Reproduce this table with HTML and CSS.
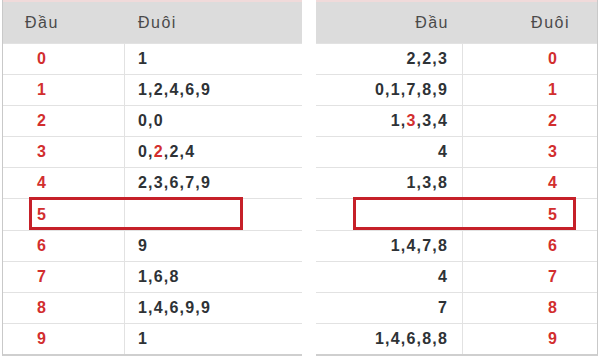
FILE: index.html
```html
<!DOCTYPE html>
<html lang="vi">
<head>
<meta charset="utf-8">
<title>Đầu Đuôi</title>
<link rel="stylesheet" href="styles.css">
</head>
<body>
<div class="page">
  <div class="tbl tbl-left">
    <div class="head"><span class="c1">Đầu</span><span class="c2">Đuôi</span></div>
    <div class="row"><span class="c1 key">0</span><span class="c2 val">1</span></div>
    <div class="row"><span class="c1 key">1</span><span class="c2 val">1,2,4,6,9</span></div>
    <div class="row"><span class="c1 key">2</span><span class="c2 val">0,0</span></div>
    <div class="row"><span class="c1 key">3</span><span class="c2 val">0,<b class="hl">2</b>,2,4</span></div>
    <div class="row"><span class="c1 key">4</span><span class="c2 val">2,3,6,7,9</span></div>
    <div class="row mark"><span class="c1 key">5</span><span class="c2 val"></span><i class="box"></i></div>
    <div class="row"><span class="c1 key">6</span><span class="c2 val">9</span></div>
    <div class="row"><span class="c1 key">7</span><span class="c2 val">1,6,8</span></div>
    <div class="row"><span class="c1 key">8</span><span class="c2 val">1,4,6,9,9</span></div>
    <div class="row"><span class="c1 key">9</span><span class="c2 val">1</span></div>
  </div>
  <div class="tbl tbl-right">
    <div class="head"><span class="c1">Đầu</span><span class="c2">Đuôi</span></div>
    <div class="row"><span class="c1 val">2,2,3</span><span class="c2 key">0</span></div>
    <div class="row"><span class="c1 val">0,1,7,8,9</span><span class="c2 key">1</span></div>
    <div class="row"><span class="c1 val">1,<b class="hl">3</b>,3,4</span><span class="c2 key">2</span></div>
    <div class="row"><span class="c1 val">4</span><span class="c2 key">3</span></div>
    <div class="row"><span class="c1 val">1,3,8</span><span class="c2 key">4</span></div>
    <div class="row mark"><span class="c1 val"></span><span class="c2 key">5</span><i class="box"></i></div>
    <div class="row"><span class="c1 val">1,4,7,8</span><span class="c2 key">6</span></div>
    <div class="row"><span class="c1 val">4</span><span class="c2 key">7</span></div>
    <div class="row"><span class="c1 val">7</span><span class="c2 key">8</span></div>
    <div class="row"><span class="c1 val">1,4,6,8,8</span><span class="c2 key">9</span></div>
  </div>
</div>
</body>
</html>
```

FILE: styles.css
```css
html, body {
  margin: 0;
  padding: 0;
  background: #ffffff;
}

body {
  font-family: "Liberation Sans", Arial, sans-serif;
  width: 600px;
  height: 357px;
  overflow: hidden;
}

.page {
  display: flex;
  gap: 14px;
  padding: 0 2px;
  align-items: flex-start;
}

.tbl {
  display: flex;
  flex-direction: column;
  border-bottom: 2px solid #cfcfcf;
  box-sizing: border-box;
}

.tbl-left {
  width: 300px;
  border-left: 1px solid #c9c9c9;
}

.tbl-right {
  width: 282px;
  border-right: 1px solid #c9c9c9;
}

.head {
  height: 43px;
  box-sizing: border-box;
  border-top: 2px solid #f0dada;
  background: #dcdcdc;
  display: grid;
  align-items: center;
  font-size: 16px;
  letter-spacing: 1.5px;
  color: #4a4a4a;
}

.row {
  position: relative;
  height: 31.1px;
  box-sizing: border-box;
  border-top: 1px solid #e2e2e2;
  display: grid;
  align-items: center;
  font-size: 16px;
  font-weight: bold;
  letter-spacing: 1.2px;
}

.tbl-left .head,
.tbl-left .row {
  grid-template-columns: 122px 1fr;
}

.tbl-right .head,
.tbl-right .row {
  grid-template-columns: 147px 1fr;
}

.row > .c1 {
  align-self: stretch;
  display: flex;
  align-items: center;
  border-right: 1px solid #e2e2e2;
}

.row .c2 {
  display: flex;
  align-items: center;
}

/* left table */
.tbl-left .head .c1 { padding-left: 22px; }
.tbl-left .head .c2 { padding-left: 13px; }
.tbl-left .row .c1 { padding-left: 34px; }
.tbl-left .row .c2 { padding-left: 13px; }

/* right table */
.tbl-right .head .c1 { text-align: right; padding-right: 14px; }
.tbl-right .head .c2 { text-align: right; padding-right: 27px; }
.tbl-right .row .c1 { justify-content: flex-end; padding-right: 14px; }
.tbl-right .row .c2 { justify-content: flex-end; padding-right: 39px; }

.key {
  color: #d22e2e;
}

.val {
  color: #2e3236;
}

.hl {
  color: #d22e2e;
  font-weight: bold;
}

.box {
  position: absolute;
  top: -2px;
  height: 33px;
  box-sizing: border-box;
  border: 3px solid #c62029;
}

.tbl-left .box {
  left: 26px;
  width: 214px;
}

.tbl-right .box {
  left: 37px;
  width: 223px;
}
```
